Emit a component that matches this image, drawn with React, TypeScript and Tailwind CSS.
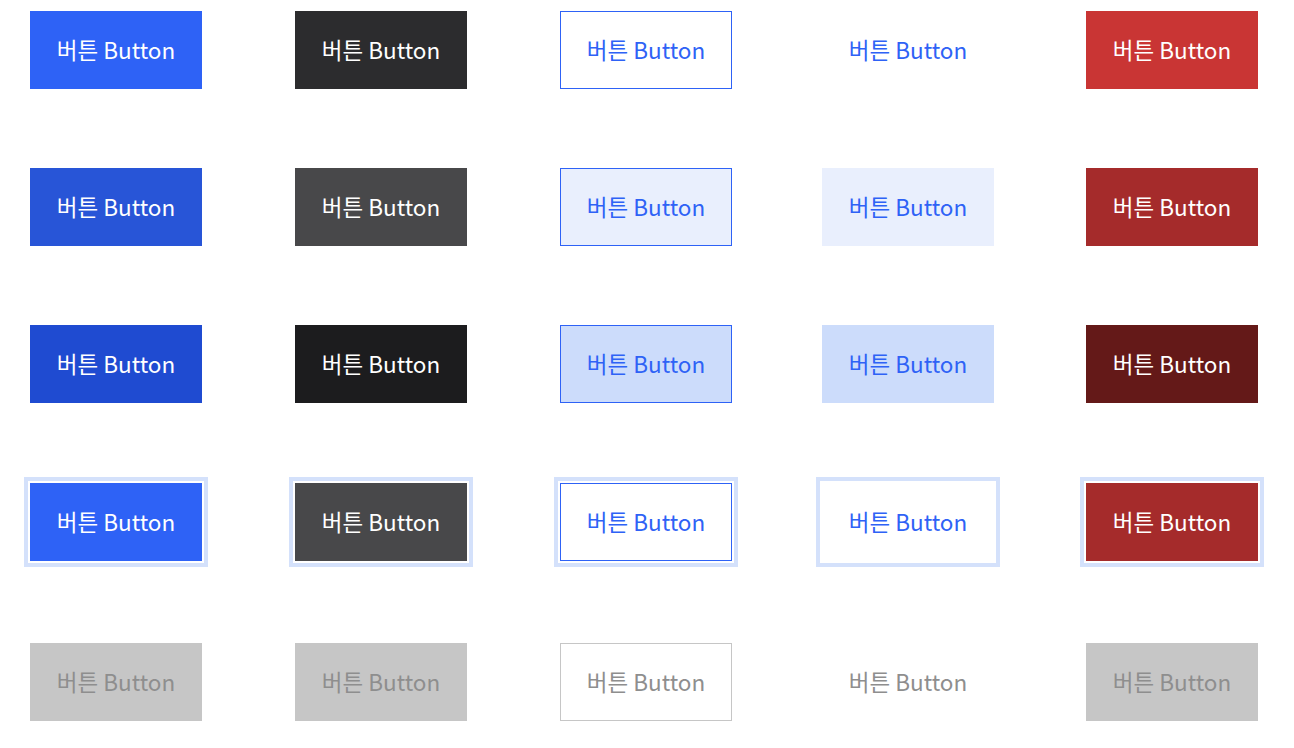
import React from 'react';

// five variants: primary, dark, outline, text, danger
// states per variant: default, hover, pressed, focus, disabled
const focusRing = 'ring-4 ring-[#d4e1fb] ring-offset-2 ring-offset-white';

const variants: string[][] = [
    [
        'bg-[#2e62f6] text-white',
        'bg-[#2855d7] text-white',
        'bg-[#1f4bd1] text-white',
        `bg-[#2e62f6] text-white ${focusRing}`,
        'bg-[#c6c6c6] text-[#8e8e8e]',
    ],
    [
        'bg-[#2c2c2e] text-white',
        'bg-[#48484a] text-white',
        'bg-[#1c1c1e] text-white',
        `bg-[#48484a] text-white ${focusRing}`,
        'bg-[#c6c6c6] text-[#8e8e8e]',
    ],
    [
        'border bg-white border-[#2e62f6] text-[#2e62f6]',
        'border bg-[#e9effd] border-[#2e62f6] text-[#2e62f6]',
        'border bg-[#ccdcfb] border-[#2e62f6] text-[#2e62f6]',
        `border bg-white border-[#2e62f6] text-[#2e62f6] ${focusRing}`,
        'border bg-white border-[#c6c6c6] text-[#8e8e8e]',
    ],
    [
        'bg-white text-[#2e62f6]',
        'bg-[#e9effd] text-[#2e62f6]',
        'bg-[#ccdcfb] text-[#2e62f6]',
        `bg-white text-[#2e62f6] ${focusRing}`,
        'bg-white text-[#8e8e8e]',
    ],
    [
        'bg-[#c93534] text-white',
        'bg-[#a52b2b] text-white',
        'bg-[#641918] text-white',
        `bg-[#a52b2b] text-white ${focusRing}`,
        'bg-[#c6c6c6] text-[#8e8e8e]',
    ],
];

const colSpacing = ['', 'ml-[93px]', 'ml-[93px]', 'ml-[90px]', 'ml-[92px]'];
const rowSpacing = ['', 'mt-[79px]', 'mt-[79px]', 'mt-[80px]', 'mt-[82px]'];

const Btn: React.FC<{ className: string }> = ({ className }) => (
    <button
        type="button"
        className={`shrink-0 w-[172px] h-[78px] pb-[2px] flex items-center justify-center text-[22.5px] leading-none ${className}`}
    >
        버튼 Button
    </button>
);

export default function App() {
    return (
        <div
            className="w-[1294px] h-[748px] bg-white pt-[11px] pl-[30px]"
            style={{ fontFamily: '"Noto Sans CJK KR", "Noto Sans", sans-serif' }}
        >
            {rowSpacing.map((mt, row) => (
                <div key={row} className={`flex ${mt}`}>
                    {variants.map((states, col) => (
                        <div key={col} className={colSpacing[col]}>
                            <Btn className={states[row]} />
                        </div>
                    ))}
                </div>
            ))}
        </div>
    );
}
